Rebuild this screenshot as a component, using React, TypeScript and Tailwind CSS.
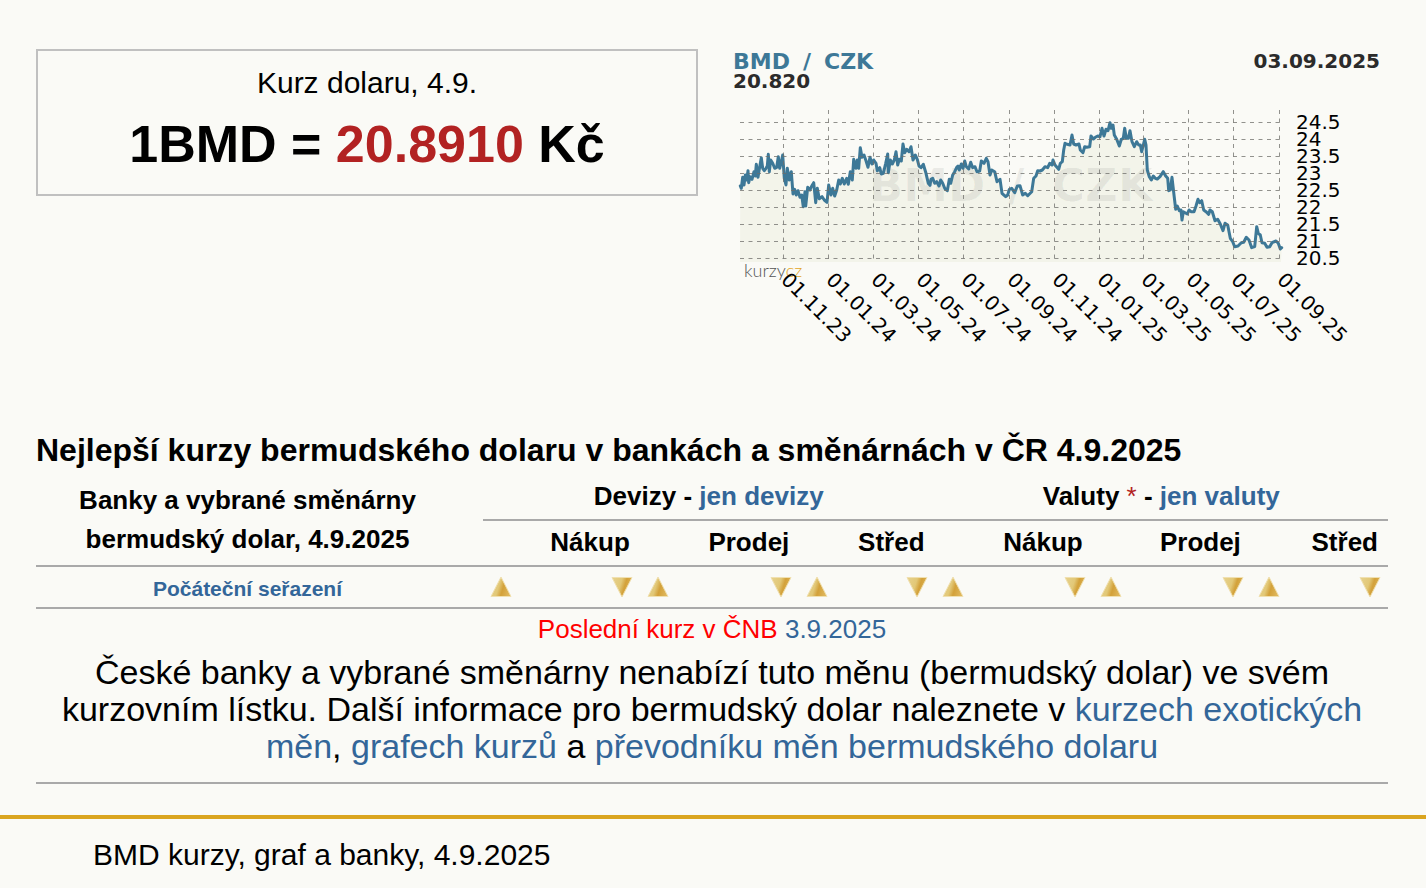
import React from 'react';

const X_TICKS = [
  { x: 54, label: '01.11.23' },
  { x: 99, label: '01.01.24' },
  { x: 144, label: '01.03.24' },
  { x: 189, label: '01.05.24' },
  { x: 234, label: '01.07.24' },
  { x: 280, label: '01.09.24' },
  { x: 325, label: '01.11.24' },
  { x: 370, label: '01.01.25' },
  { x: 414, label: '01.03.25' },
  { x: 459, label: '01.05.25' },
  { x: 504, label: '01.07.25' },
  { x: 550, label: '01.09.25' },
];

const Y_TICKS = ['24.5', '24', '23.5', '23', '22.5', '22', '21.5', '21', '20.5'];

// points are in thirds of a pixel, x relative to the start of each section
const SECTIONS = [
  {
    start: 0,
    points: '31,258 34,265 38,232 42,255 46,225 50,240 54,212 56,248 60,230 66,238 72,215 76,228 79,193 84,232 89,200 94,173 98,205 103,212 108,205 112,198 115,163 118,215 122,180 128,190 134,205 140,202 145,170 149,205 153,190 158,165 163,235 168,255 172,205 178,240 184,215 189,282 194,268 199,285 204,272 210,292 215,285 220,320 225,275 227,318 233,262 240,270 245,258 251,248 257,308 262,265 268,296 276,290 283,300 291,307 296,255 303,285 308,265 314,288 320,270 326,240 331,252 337,235 343,252 350,235 355,253 361,215 367,240 371,178 378,205 382,180 386,205 391,143 396,172 402,165 408,182 414,202 420,172 426,192 431,180 438,190 442,212 449,203 454,222 460,220 467,190 473,162 475,218 481,180 487,192 493,180 498,155 503,195 508,178 514,183 519,132 524,158 530,148 537,155 543,140 549,180 556,165 562,178 567,198',
  },
  {
    start: 570,
    points: '3,203 10,193 18,220 25,250 30,256 33,238 38,235 44,250 50,245 57,258 62,240 68,250 74,265 82,272 88,238 92,250 98,225 104,215 110,202 114,198 118,210 124,192 129,205 134,183 139,200 146,207 152,187 158,203 165,200 171,215 179,213 184,183 192,190 199,175 204,185 210,225 215,210 224,215 231,245 240,238 246,280 257,290 263,285 268,268 275,265 284,278 292,258 300,257 308,285 316,280 323,287 335,275 341,235 348,228 353,212 360,213 367,210 375,200 383,203 389,190 396,195 399,180 405,195 416,208 421,190 427,185 431,150 435,130 442,133 450,135 456,105 461,132 468,135 477,132 481,150 489,158 494,140 500,142 509,140 513,108 520,117 526,112 533,108',
  },
  {
    start: 1110,
    points: '0,110 6,85 12,108 18,88 24,92 30,68 34,85 39,75 43,105 50,118 58,138 64,118 70,115 74,85 79,115 85,115 90,92 96,125 103,140 110,125 116,135 121,135 125,155 130,135 134,118 138,135 142,210 148,230 154,240 160,228 166,235 172,237 180,230 190,215 197,228 203,235 206,272 211,270 216,232 222,285 227,328 232,318 238,332 243,330 246,360 250,335 262,342 267,330 273,335 282,335 288,318 294,298 299,308 305,302 311,330 318,335 326,343 330,330 337,335 345,362 353,358 361,372 369,392 375,370 383,375 391,415 398,425 404,440 414,438 424,428 431,427 439,412 447,420 455,443 464,440 470,380 475,400 481,405 486,428 494,430 501,442 509,440 516,428 528,423 535,430 541,447 545,443',
  },
];

const LINE = SECTIONS.flatMap(({ start, points }) =>
  points.split(' ').map((pair) => {
    const [x, y] = pair.split(',').map(Number);
    return `${((x + start) / 3).toFixed(1)},${(y / 3 + 60).toFixed(1)}`;
  })
).join(' ');

const SORT_COLUMNS = ['Devizy nákup', 'Devizy prodej', 'Devizy střed', 'Valuty nákup', 'Valuty prodej', 'Valuty střed'];

function RateChart() {
  return (
    <svg viewBox="0 0 658 310" className="block w-[658px] max-w-full" fontFamily="'DejaVu Sans', sans-serif" role="img" aria-label="Graf BMD / CZK">
      <polygon points={`${LINE} 551,222 10,222`} fill="#f3f4ea" />
      <text y="161" fontSize="45" fontWeight="700" fill="#000" fillOpacity="0.06">
        <tspan x="139">BMD</tspan>
        <tspan x="278">/</tspan>
        <tspan x="322">CZK</tspan>
      </text>
      <polyline points={LINE} fill="none" stroke="#3d7897" strokeWidth="3" strokeLinejoin="round" strokeLinecap="round" />
      <g stroke="#6e6e6a" strokeOpacity="0.75" strokeDasharray="4 4.5">
        {Y_TICKS.map((label, i) => (
          <line key={label} x1="10" x2="550" y1={82.5 + i * 17} y2={82.5 + i * 17} />
        ))}
        {X_TICKS.map(({ x, label }) => (
          <line key={label} x1={x - 0.5} x2={x - 0.5} y1="70" y2="222" />
        ))}
      </g>
      <text y="29" fontSize="22" fontWeight="700" fill="#3d7897">
        <tspan x="3">BMD</tspan>
        <tspan x="73">/</tspan>
        <tspan x="94">CZK</tspan>
      </text>
      <text x="3" y="48" fontSize="20" fontWeight="700" fill="#2b2b2b">20.820</text>
      <text x="650" y="28" textAnchor="end" fontSize="20" fontWeight="700" fill="#2b2b2b">03.09.2025</text>
      <text x="14" y="237" fontFamily="Lato, sans-serif" fontSize="18" fontWeight="300" fill="#555">
        kurzy<tspan fill="#e3a51c">cz</tspan>
      </text>
      <g fontSize="20">
        {Y_TICKS.map((label, i) => (
          <text key={label} x="566" y={89 + i * 17}>{label}</text>
        ))}
        {X_TICKS.map(({ x, label }) => (
          <text key={label} transform={`translate(${x - 4} 241) rotate(45)`}>{label}</text>
        ))}
      </g>
    </svg>
  );
}

function SortArrow({ down = false, label }: { down?: boolean; label: string }) {
  const id = `gold-${label.replace(/\s/g, '-')}`;
  return (
    <button type="button" aria-label={label} className="block h-6 w-6">
      <svg viewBox="0 0 24 24" className="h-6 w-6">
        <defs>
          <linearGradient id={id} x1="0" y1="0.3" x2="1" y2="0.6">
            <stop offset="0" stopColor="#e6d08a" />
            <stop offset="0.4" stopColor="#e2c877" />
            <stop offset="0.62" stopColor="#d3a13a" />
            <stop offset="1" stopColor="#dfb75c" />
          </linearGradient>
        </defs>
        <path d={down ? 'M2 2.5H22L12 22Z' : 'M12 2L22 21.5H2Z'} fill={`url(#${id})`} stroke="#f0e0b0" strokeWidth="1" />
      </svg>
    </button>
  );
}

function Link({ children }: { children: React.ReactNode }) {
  return <a href="#" className="text-[#336699]">{children}</a>;
}

export default function App() {
  return (
    <div className="min-h-screen bg-[#fafaf6] font-['Liberation_Sans',Arial,sans-serif] text-black">
      <div className="pt-10 pr-[38px] pl-9">
        <div className="grid grid-cols-[662px_minmax(0,1fr)] gap-8">
          <section className="mt-[9px] self-start border-2 border-[#c0c0c0] pt-3 pb-5 text-center">
            <p className="text-[30px] leading-10">Kurz dolaru, 4.9.</p>
            <p className="mt-[11px] text-[52px] leading-[60px] font-bold">
              1BMD = <span className="text-[#b22222]">20.8910</span> Kč
            </p>
          </section>
          <RateChart />
        </div>

        <h2 className="mt-20 text-[32px] leading-10 font-bold">
          Nejlepší kurzy bermudského dolaru v bankách a směnárnách v ČR 4.9.2025
        </h2>

        <table className="mt-1 w-full table-fixed border-collapse text-[26px] leading-9">
          <colgroup>
            <col className="w-[33.06%]" />
            <col className="w-[11.6%]" />
            <col className="w-[11.8%]" />
            <col className="w-[10%]" />
            <col className="w-[11.7%]" />
            <col className="w-[11.7%]" />
            <col />
          </colgroup>
          <thead>
            <tr className="h-[46px]">
              <th rowSpan={2} className="border-b-2 border-[#a9a9a9] pr-6 leading-[39px]">
                Banky a vybrané směnárny
                <br />
                bermudský dolar, 4.9.2025
              </th>
              <th colSpan={3} className="border-b-2 border-[#a9a9a9] pb-0.5">
                Devizy - <Link>jen devizy</Link>
              </th>
              <th colSpan={3} className="border-b-2 border-[#a9a9a9] pb-0.5">
                Valuty <span className="font-normal text-[#b22222]">*</span> - <Link>jen valuty</Link>
              </th>
            </tr>
            <tr className="h-[46px] border-b-2 border-[#a9a9a9]">
              <th className="pr-2.5 pb-0.5 text-right">Nákup</th>
              <th className="pr-2.5 pb-0.5 text-right">Prodej</th>
              <th className="pr-2.5 pb-0.5 text-right">Střed</th>
              <th className="pr-2.5 pb-0.5 text-right">Nákup</th>
              <th className="pr-2.5 pb-0.5 text-right">Prodej</th>
              <th className="pr-2.5 pb-0.5 text-right">Střed</th>
            </tr>
          </thead>
          <tbody>
            <tr className="h-[42px] border-b-2 border-[#a9a9a9]">
              <td className="pt-1 pr-6 text-center text-[21px] font-bold"><Link>Počáteční seřazení</Link></td>
              {SORT_COLUMNS.map((name) => (
                <td key={name} className="px-[6px]">
                  <div className="flex justify-between">
                    <SortArrow label={`${name} vzestupně`} />
                    <SortArrow label={`${name} sestupně`} down />
                  </div>
                </td>
              ))}
            </tr>
            <tr className="border-b-2 border-[#a9a9a9] text-center">
              <td colSpan={7} className="pt-0.5 pb-[17px]">
                <p><span className="text-[#ff0000]">Poslední kurz v ČNB</span> <Link>3.9.2025</Link></p>
                <p className="mt-[7px] px-6 text-[34px] leading-[37px]">
                  České banky a vybrané směnárny nenabízí tuto měnu (bermudský dolar) ve svém kurzovním lístku. Další informace pro bermudský dolar naleznete v <Link>kurzech exotických měn</Link>, <Link>grafech kurzů</Link> a <Link>převodníku měn bermudského dolaru</Link>
                </p>
              </td>
            </tr>
          </tbody>
        </table>
      </div>

      <footer className="mt-[31px] border-t-4 border-[#daa520] px-[93px] pt-4 text-[30px] leading-10">
        BMD kurzy, graf a banky, 4.9.2025
      </footer>
    </div>
  );
}
